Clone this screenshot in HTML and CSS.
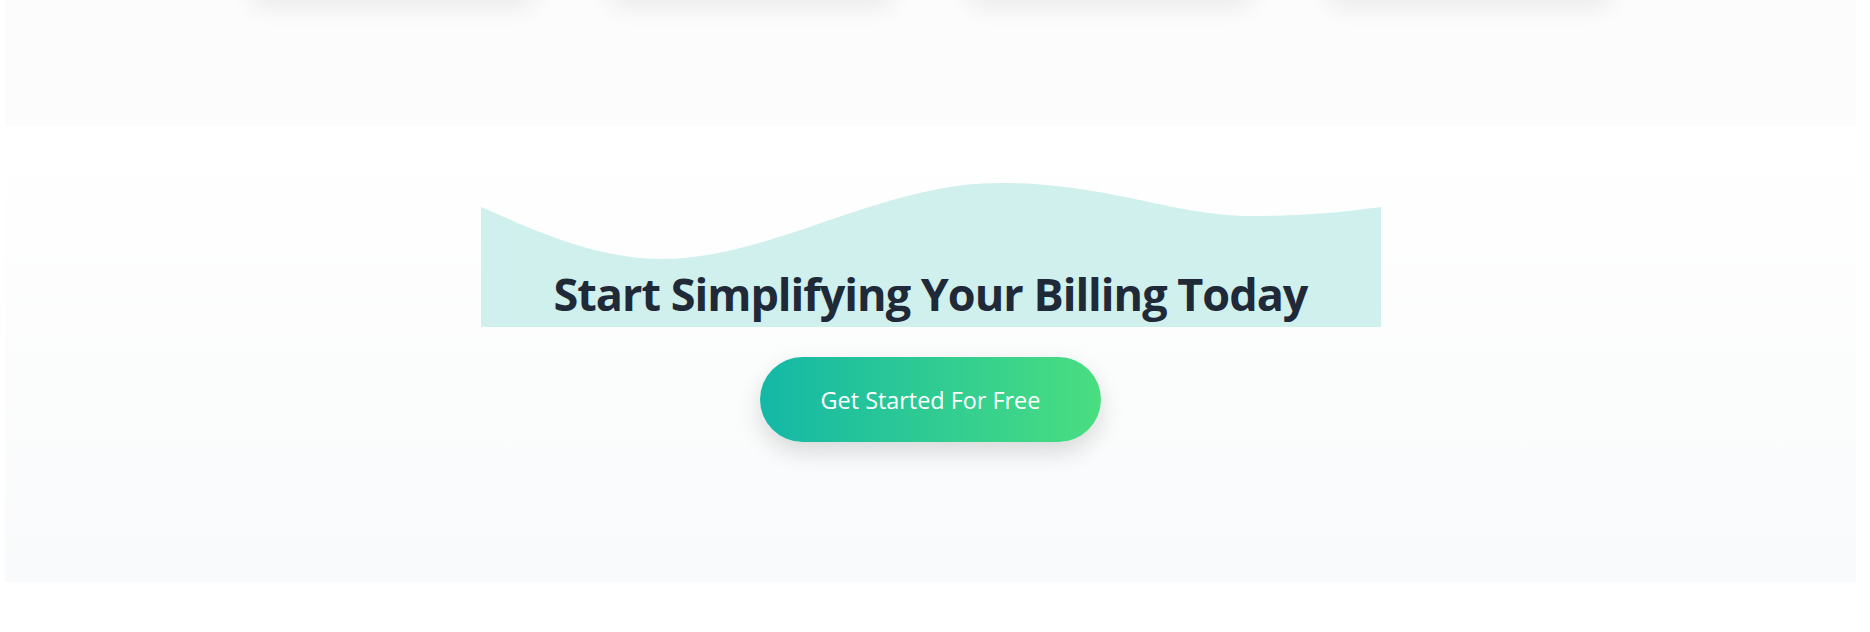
FILE: index.html
```html
<!DOCTYPE html>
<html lang="en">
<head>
<meta charset="utf-8">
<title>Start Simplifying Your Billing Today</title>
<link rel="stylesheet" href="styles.css">
</head>
<body>
<div class="page">
  <section class="features">
    <div class="feature-grid">
      <div class="feature-card"></div>
      <div class="feature-card"></div>
      <div class="feature-card"></div>
      <div class="feature-card"></div>
    </div>
  </section>
  <section class="cta">
    <div class="cta-title">
      <svg class="wave" viewBox="0 0 900 78" preserveAspectRatio="none" aria-hidden="true">
        <path d="M0,24 C45,43 110,76 181,76 C290,76 400,0 518,0 C630,0 690,33 771,33 C830,33 870,28 900,24 L900,78 L0,78 Z" fill="#cff0ec"/>
      </svg>
      <h2 class="cta-heading">Start Simplifying Your Billing Today</h2>
    </div>
    <a class="cta-button" href="#">Get Started For Free</a>
  </section>
</div>
</body>
</html>
```

FILE: styles.css
```css
html, body {
  margin: 0;
  padding: 0;
  background: #ffffff;
}

body {
  font-family: "Open Sans", "Noto Sans", sans-serif;
  overflow: hidden;
}

.page {
  margin: 0 14px 0 5px;
}

.features {
  background: #fcfcfc;
  padding-bottom: 128px;
}

.feature-grid {
  display: grid;
  grid-template-columns: repeat(4, 285px);
  gap: 74px;
  justify-content: center;
  margin-top: -302px;
}

.feature-card {
  height: 300px;
  background: #ffffff;
  border-radius: 16px;
  box-shadow: 0 10px 25px rgba(0, 0, 0, 0.07);
}

.cta {
  background: linear-gradient(to bottom, #ffffff 0%, #f9fafb 100%);
  padding: 57px 0 140px;
  display: flex;
  flex-direction: column;
  align-items: center;
}

.cta-title {
  width: 900px;
  display: flex;
  flex-direction: column;
  margin-bottom: 30px;
}

.wave {
  display: block;
  width: 900px;
  height: 78px;
}

.cta-heading {
  margin: 0;
  background: #cff0ec;
  color: #1f2937;
  font-size: 45px;
  font-weight: 700;
  letter-spacing: -1px;
  line-height: 66px;
  text-align: center;
}

.cta-button {
  display: inline-block;
  padding: 25px 61px 23px;
  font-size: 23.4px;
  line-height: 37px;
  color: #ffffff;
  text-decoration: none;
  border-radius: 9999px;
  background: linear-gradient(to right, #14b8a6, #4ade80);
  box-shadow: 0 10px 25px rgba(0, 0, 0, 0.14);
}
```
